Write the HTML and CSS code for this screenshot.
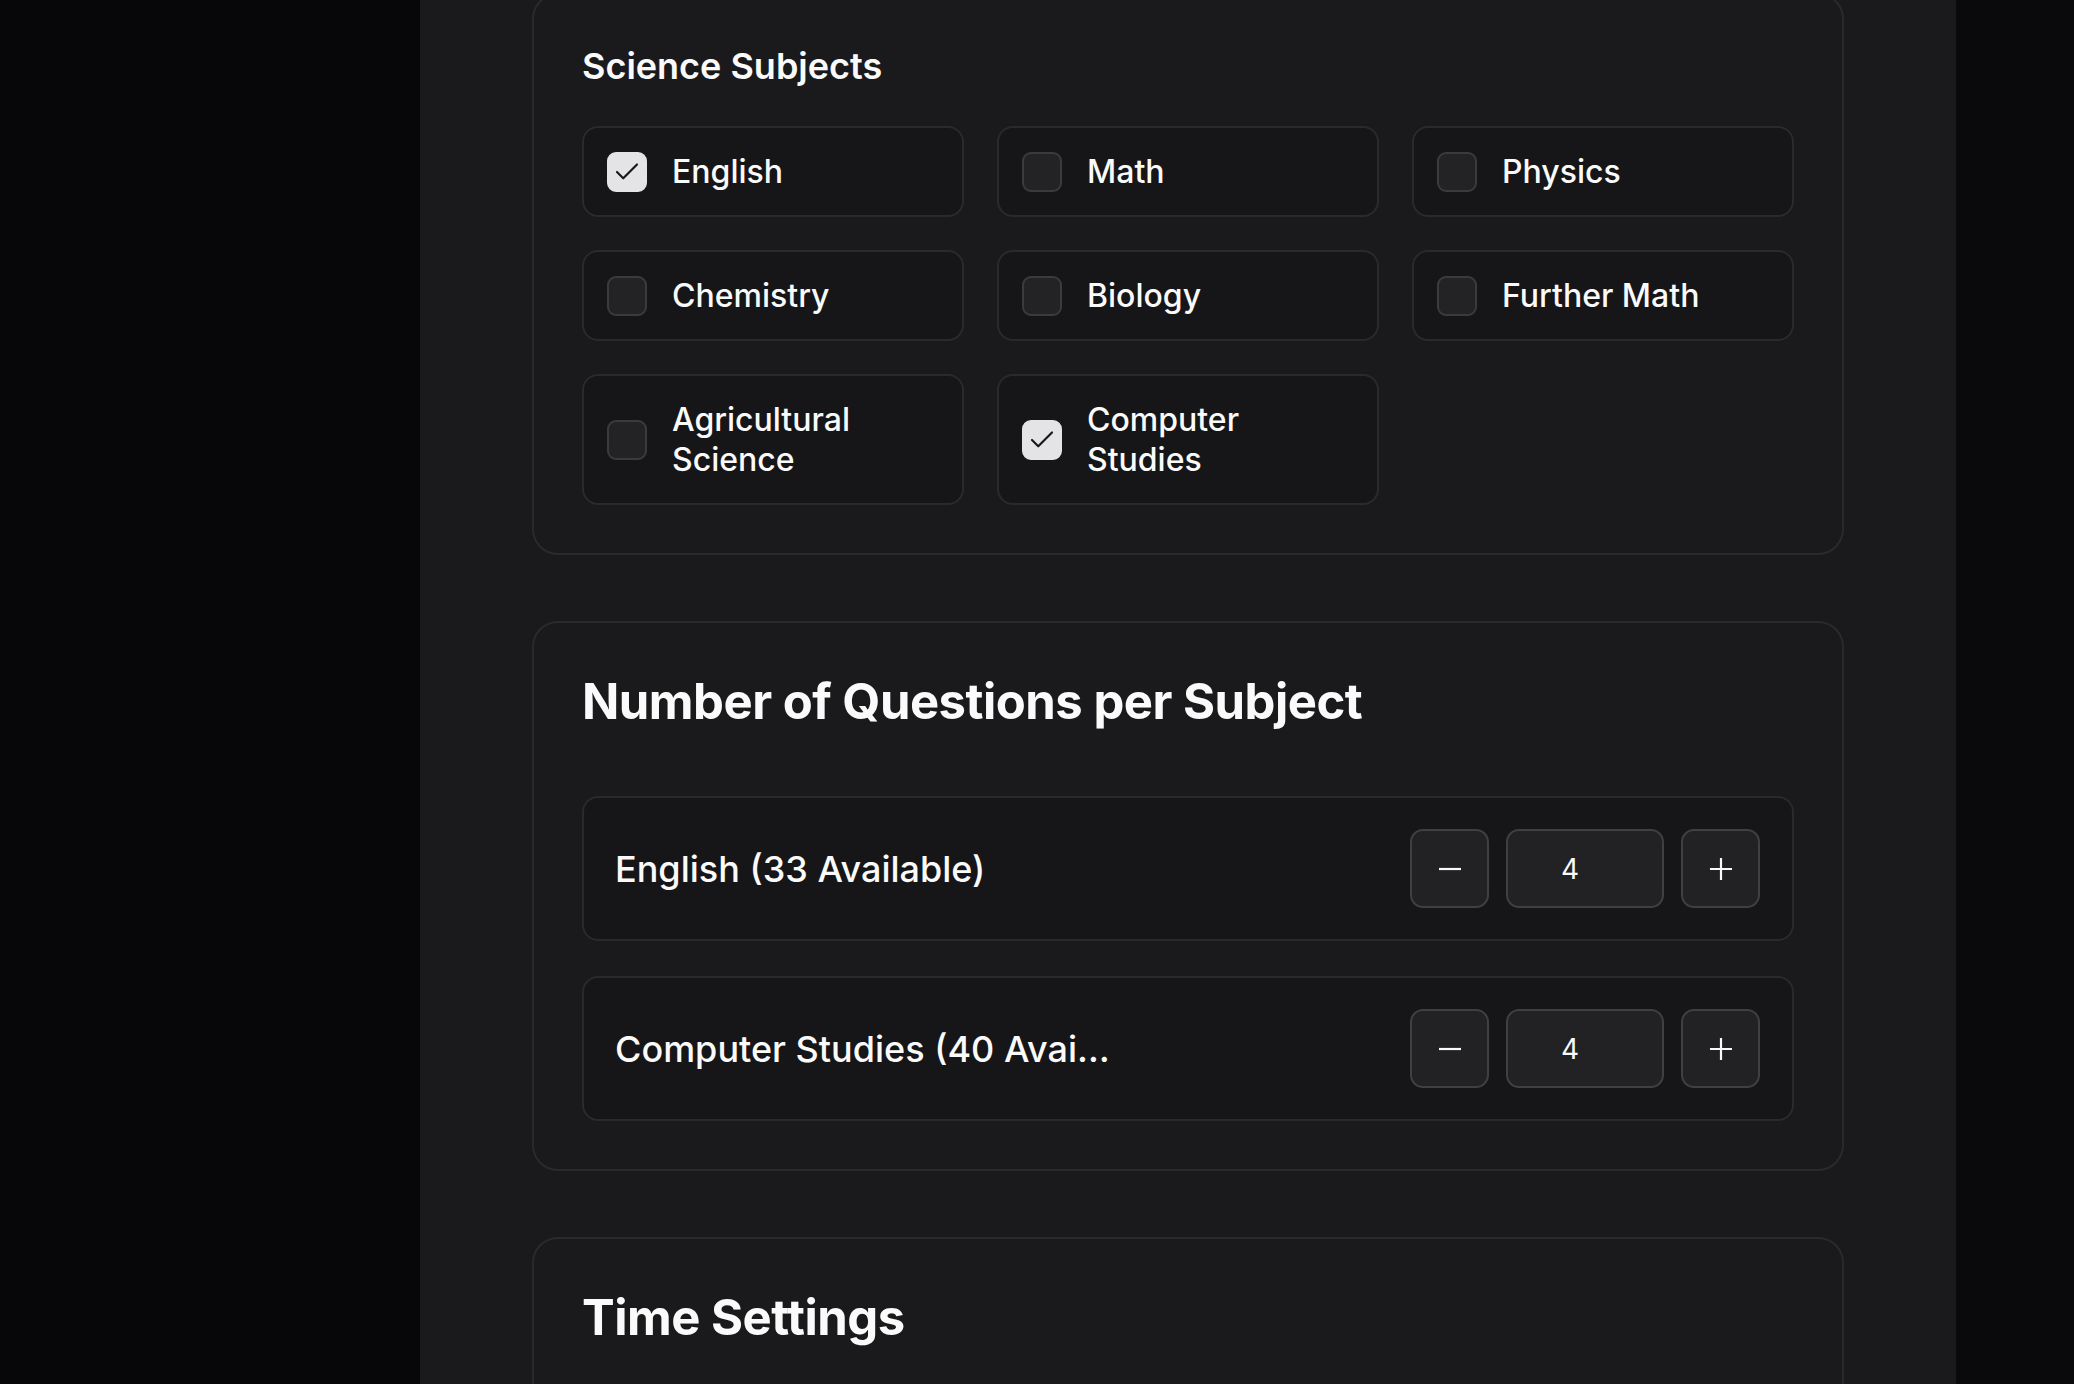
FILE: index.html
```html
<!DOCTYPE html>
<html lang="en">
<head>
<meta charset="utf-8">
<title>Exam Settings</title>
<link rel="stylesheet" href="styles.css">
</head>
<body>
<div class="app">
  <aside class="side"></aside>
  <main class="panel">
    <section class="card card-first">
      <h3 class="group-title">Science Subjects</h3>
      <div class="subject-grid">
        <label class="subject">
          <span class="box checked"><svg viewBox="0 0 24 24" width="30" height="30"><path d="M20 6 9 17l-5-5" fill="none" stroke="#18181b" stroke-width="1.7" stroke-linecap="round" stroke-linejoin="round"/></svg></span>
          <span class="subject-name">English</span>
        </label>
        <label class="subject">
          <span class="box"></span>
          <span class="subject-name">Math</span>
        </label>
        <label class="subject">
          <span class="box"></span>
          <span class="subject-name">Physics</span>
        </label>
        <label class="subject">
          <span class="box"></span>
          <span class="subject-name">Chemistry</span>
        </label>
        <label class="subject">
          <span class="box"></span>
          <span class="subject-name">Biology</span>
        </label>
        <label class="subject">
          <span class="box"></span>
          <span class="subject-name">Further Math</span>
        </label>
        <label class="subject">
          <span class="box"></span>
          <span class="subject-name">Agricultural<br>Science</span>
        </label>
        <label class="subject">
          <span class="box checked"><svg viewBox="0 0 24 24" width="30" height="30"><path d="M20 6 9 17l-5-5" fill="none" stroke="#18181b" stroke-width="1.7" stroke-linecap="round" stroke-linejoin="round"/></svg></span>
          <span class="subject-name">Computer<br>Studies</span>
        </label>
      </div>
    </section>

    <section class="card">
      <h2 class="card-title">Number of Questions per Subject</h2>
      <div class="rows">
        <div class="qrow">
          <span class="qlabel">English (33 Available)</span>
          <div class="stepper">
            <button class="step-btn" type="button"><svg viewBox="0 0 22 22" width="22" height="22"><path d="M0 11h22" stroke="#fafafa" stroke-width="2.2"/></svg></button>
            <div class="step-val">4</div>
            <button class="step-btn" type="button"><svg viewBox="0 0 22 22" width="22" height="22"><path d="M0 11h22M11 0v22" stroke="#fafafa" stroke-width="2.2"/></svg></button>
          </div>
        </div>
        <div class="qrow">
          <span class="qlabel">Computer Studies (40 Available)</span>
          <div class="stepper">
            <button class="step-btn" type="button"><svg viewBox="0 0 22 22" width="22" height="22"><path d="M0 11h22" stroke="#fafafa" stroke-width="2.2"/></svg></button>
            <div class="step-val">4</div>
            <button class="step-btn" type="button"><svg viewBox="0 0 22 22" width="22" height="22"><path d="M0 11h22M11 0v22" stroke="#fafafa" stroke-width="2.2"/></svg></button>
          </div>
        </div>
      </div>
    </section>

    <section class="card card-last">
      <h2 class="card-title">Time Settings</h2>
    </section>
  </main>
  <div class="rest"></div>
</div>
</body>
</html>
```

FILE: styles.css
```css
* {
  box-sizing: border-box;
  margin: 0;
  padding: 0;
}

html, body {
  height: 100%;
}

body {
  background: #09090b;
  font-family: Inter, "Noto Sans", sans-serif;
  color: #fafafa;
  overflow: hidden;
}

.app {
  display: flex;
  height: 1384px;
}

.side {
  width: 420px;
  flex: none;
  background: #070709;
}

.panel {
  width: 1536px;
  flex: none;
  background: #1a1a1c;
  padding: 0 112px;
  display: flex;
  flex-direction: column;
  gap: 66px;
  overflow: hidden;
}

.rest {
  flex: 1;
  background: #0a0a0c;
}

.card {
  border: 2px solid #2a2a2e;
  border-radius: 26px;
  padding: 49px 48px 48px;
  flex: none;
}

.card-first {
  margin-top: -7px;
}

.card-last {
  min-height: 400px;
}

.group-title {
  font-size: 36px;
  line-height: 44px;
  font-weight: 600;
  margin-bottom: 38px;
}

.subject-grid {
  display: grid;
  grid-template-columns: repeat(3, 1fr);
  gap: 33px;
}

.subject {
  display: flex;
  align-items: center;
  gap: 25px;
  padding: 23.5px 23px;
  border: 2px solid #2a2a2e;
  border-radius: 16px;
  background: #161618;
}

.box {
  width: 40px;
  height: 40px;
  flex: none;
  border-radius: 9px;
  border: 2px solid #3a3a3f;
  background: #232326;
  display: flex;
  align-items: center;
  justify-content: center;
}

.box.checked {
  background: #e4e4e7;
  border-color: #e4e4e7;
}

.subject-name {
  font-size: 32px;
  line-height: 40px;
  font-weight: 500;
}

.card-title {
  font-size: 49px;
  line-height: 60px;
  font-weight: 700;
  letter-spacing: -0.5px;
  margin-bottom: 64px;
}

.rows {
  display: flex;
  flex-direction: column;
  gap: 35px;
}

.qrow {
  display: flex;
  align-items: center;
  justify-content: space-between;
  padding: 31px 32px 31px 31px;
  border: 2px solid #2a2a2e;
  border-radius: 16px;
  background: #161618;
}

.qlabel {
  font-size: 36px;
  line-height: 44px;
  font-weight: 500;
  white-space: nowrap;
  overflow: hidden;
  text-overflow: ellipsis;
  max-width: 500px;
}

.stepper {
  display: flex;
  gap: 17px;
  flex: none;
}

.step-btn {
  width: 79px;
  height: 79px;
  border: 2px solid #3f3f44;
  border-radius: 13px;
  background: #222225;
  display: flex;
  align-items: center;
  justify-content: center;
  cursor: pointer;
}

.step-val {
  width: 158px;
  height: 79px;
  border: 2px solid #3f3f44;
  border-radius: 13px;
  background: #222225;
  display: flex;
  align-items: center;
  justify-content: center;
  padding-right: 30px;
  font-size: 28px;
  font-weight: 400;
  color: #fafafa;
}
```
